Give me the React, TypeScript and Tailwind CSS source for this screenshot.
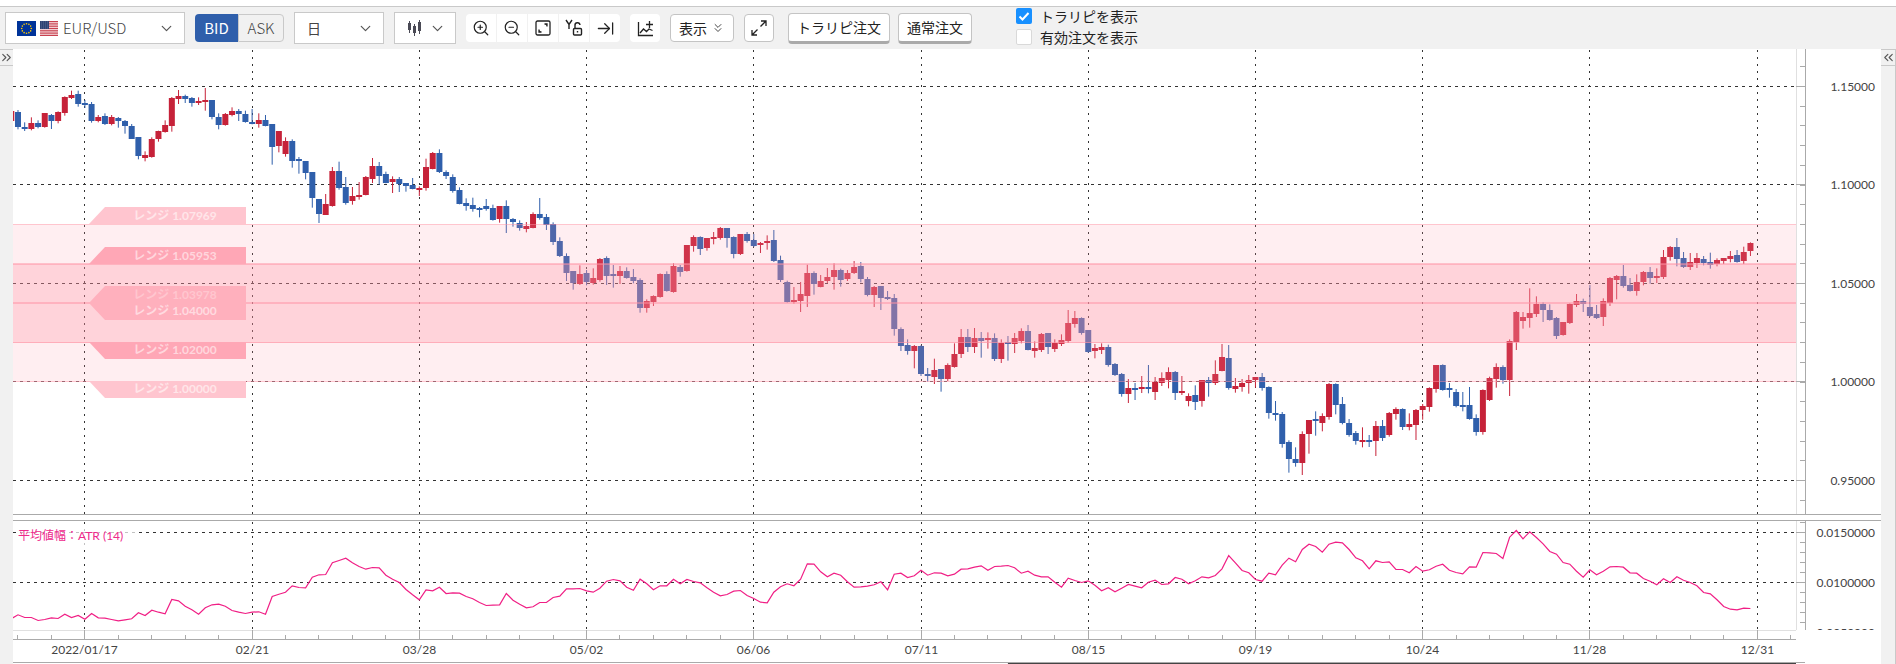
import { ArrowRightToLine, ChevronDown, ChevronsDown, ChevronsLeft, ChevronsRight, ZoomIn, ZoomOut } from "lucide-react";
import type { ReactNode } from "react";

// [direction, high, body top, body bottom, low], in thirds of a pixel
type Candle = [string, number, number, number, number];

const shift = (base: number, rows: Candle[]): Candle[] =>
  rows.map(([d, h, t, b, l]) => [d, h + base, t + base, b + base, l + base]);

const candles: Candle[] = [
  ...shift(0, [
    ["u", 178, 182, 213, 216], ["d", 180, 186, 231, 238], ["d", 217, 231, 237, 243], ["u", 202, 219, 238, 241],
    ["d", 211, 219, 231, 235], ["u", 190, 190, 231, 233], ["d", 192, 195, 213, 237], ["u", 184, 186, 213, 220],
    ["u", 139, 141, 189, 197], ["u", 122, 135, 144, 147], ["d", 122, 133, 162, 170], ["d", 150, 159, 165, 174],
    ["d", 156, 162, 213, 218], ["u", 195, 201, 214, 217], ["d", 190, 199, 224, 225], ["u", 195, 201, 222, 226],
    ["d", 201, 204, 214, 233], ["d", 210, 212, 228, 251], ["d", 222, 227, 265, 266], ["d", 261, 262, 320, 328],
    ["u", 304, 315, 323, 334], ["u", 262, 267, 321, 323], ["u", 242, 244, 268, 275], ["u", 211, 224, 246, 248],
    ["u", 141, 144, 227, 245], ["u", 120, 138, 147, 162], ["d", 134, 138, 147, 159], ["d", 141, 143, 159, 170],
    ["u", 142, 153, 157, 165], ["u", 114, 151, 155, 182], ["d", 151, 151, 202, 208], ["d", 190, 202, 226, 238],
    ["u", 189, 192, 226, 227], ["u", 172, 183, 195, 199], ["d", 177, 182, 191, 213], ["d", 182, 192, 215, 218],
    ["d", 177, 216, 222, 223], ["u", 190, 210, 223, 233], ["d", 195, 210, 228, 229], ["d", 222, 222, 291, 344],
    ["u", 243, 244, 288, 307], ["u", 262, 274, 312, 320], ["d", 268, 274, 333, 353], ["d", 321, 327, 333, 371],
    ["d", 333, 334, 370, 388], ["d", 366, 366, 444, 473], ["d", 447, 447, 492, 519], ["u", 432, 462, 494, 495],
    ["u", 351, 363, 468, 470], ["d", 335, 363, 414, 419], ["d", 381, 411, 459, 464], ["u", 411, 438, 453, 464],
    ["u", 396, 435, 442, 449], ["u", 378, 381, 435, 436], ["u", 324, 348, 387, 399], ["d", 336, 348, 377, 404],
    ["d", 365, 373, 399, 400], ["u", 379, 387, 396, 429],
  ]),
  ...shift(240, [
    ["d", 141, 148, 162, 186], ["d", 159, 159, 168, 185], ["d", 144, 165, 177, 178], ["u", 169, 173, 177, 198],
    ["u", 86, 111, 175, 182], ["u", 66, 69, 117, 118], ["d", 58, 69, 127, 129], ["d", 121, 126, 138, 147],
    ["d", 133, 141, 183, 188], ["d", 172, 180, 222, 223], ["d", 205, 220, 228, 242], ["d", 203, 225, 237, 245],
    ["d", 231, 235, 240, 262], ["d", 207, 228, 237, 242], ["d", 224, 233, 270, 272], ["u", 228, 229, 269, 278],
    ["d", 211, 228, 266, 309], ["d", 264, 267, 276, 290], ["d", 271, 279, 295, 302], ["u", 276, 288, 297, 307],
    ["u", 247, 252, 293, 295], ["d", 204, 252, 263, 269], ["d", 252, 261, 286, 300], ["d", 277, 283, 336, 345],
    ["d", 322, 333, 378, 381], ["d", 370, 378, 429, 453], ["d", 423, 424, 461, 479], ["u", 406, 433, 462, 465],
    ["d", 420, 430, 456, 466], ["u", 415, 445, 459, 464], ["u", 384, 387, 449, 455], ["d", 379, 384, 437, 465],
    ["d", 405, 432, 437, 473], ["u", 408, 423, 439, 462], ["d", 412, 423, 444, 446], ["d", 417, 441, 453, 460],
    ["d", 445, 450, 534, 548], ["u", 508, 514, 534, 548], ["u", 496, 498, 516, 528], ["u", 430, 432, 501, 503],
    ["d", 424, 432, 483, 485], ["u", 400, 409, 486, 488], ["d", 405, 411, 426, 440], ["u", 345, 346, 423, 425],
    ["u", 316, 321, 348, 365], ["d", 319, 321, 356, 375], ["u", 324, 324, 353, 362], ["u", 306, 321, 326, 343],
    ["u", 291, 294, 324, 329], ["d", 294, 294, 324, 353], ["d", 319, 321, 372, 385], ["u", 312, 312, 372, 375],
    ["d", 306, 312, 332, 338], ["d", 312, 331, 348, 351], ["u", 336, 338, 345, 369], ["u", 316, 333, 339, 359],
    ["d", 300, 331, 393, 396],
  ]),
  ...shift(480, [
    ["d", 137, 149, 210, 216], ["d", 212, 216, 275, 278], ["u", 231, 270, 275, 281], ["u", 216, 252, 273, 306],
    ["u", 164, 189, 258, 291], ["d", 184, 190, 224, 254], ["u", 195, 213, 230, 232], ["u", 174, 201, 213, 219],
    ["u", 160, 180, 201, 239], ["d", 176, 180, 209, 230], ["u", 180, 189, 207, 213], ["u", 153, 172, 189, 192],
    ["d", 156, 169, 209, 217], ["d", 201, 207, 255, 259], ["u", 228, 230, 255, 291], ["d", 228, 229, 265, 300],
    ["d", 243, 261, 266, 270], ["d", 252, 265, 359, 377], ["d", 352, 358, 408, 423], ["d", 388, 405, 423, 434],
    ["u", 405, 408, 422, 475], ["d", 406, 408, 492, 498], ["d", 474, 492, 497, 515], ["u", 446, 481, 503, 522],
    ["d", 477, 478, 507, 545], ["u", 460, 465, 507, 513], ["u", 400, 432, 471, 473], ["u", 357, 381, 432, 444],
    ["d", 357, 381, 411, 426], ["u", 354, 384, 410, 429], ["d", 366, 384, 392, 443], ["u", 367, 384, 391, 416],
    ["d", 370, 384, 447, 453], ["u", 388, 399, 447, 459], ["d", 378, 397, 402, 452], ["u", 369, 384, 402, 429],
    ["u", 355, 363, 393, 400], ["d", 345, 362, 419, 421], ["u", 394, 414, 423, 443], ["u", 369, 372, 419, 426],
    ["d", 369, 370, 411, 432], ["u", 388, 400, 417, 426], ["u", 373, 391, 402, 408], ["u", 300, 339, 393, 399],
    ["u", 303, 324, 342, 353], ["d", 322, 324, 369, 374], ["d", 360, 361, 426, 428], ["u", 402, 414, 423, 445],
    ["u", 400, 411, 419, 432], ["d", 404, 411, 465, 470], ["d", 459, 462, 494, 498], ["d", 489, 492, 551, 560],
    ["u", 507, 534, 552, 579], ["d", 519, 534, 539, 570], ["u", 498, 531, 537, 549], ["d", 465, 531, 538, 550],
    ["u", 501, 516, 546, 570],
  ]),
  ...shift(690, [
    ["u", 277, 294, 309, 318], ["u", 262, 276, 299, 325], ["d", 273, 276, 339, 360], ["u", 288, 333, 339, 345],
    ["u", 340, 348, 363, 379], ["d", 316, 346, 366, 390], ["u", 300, 301, 363, 380], ["d", 291, 300, 309, 350],
    ["u", 241, 282, 309, 315], ["u", 192, 231, 273, 274], ["d", 195, 234, 324, 329], ["u", 294, 318, 327, 338],
    ["u", 297, 308, 321, 335], ["u", 285, 300, 308, 341], ["u", 291, 291, 300, 323], ["d", 279, 291, 323, 332],
    ["d", 319, 321, 399, 416], ["d", 363, 399, 406, 422], ["d", 396, 402, 491, 503], ["d", 481, 487, 538, 578],
    ["d", 502, 537, 548, 560], ["u", 454, 462, 548, 585], ["u", 420, 420, 462, 521], ["d", 394, 417, 424, 467],
    ["u", 400, 409, 429, 454], ["u", 309, 312, 410, 419], ["d", 310, 312, 375, 403], ["d", 351, 373, 431, 433],
    ["d", 417, 429, 465, 470], ["d", 453, 460, 483, 494], ["u", 442, 480, 486, 502], ["d", 465, 480, 485, 501],
    ["u", 423, 438, 482, 528], ["d", 420, 438, 473, 483], ["u", 396, 399, 466, 470], ["u", 382, 388, 402, 419],
    ["d", 385, 388, 441, 450], ["u", 400, 432, 441, 451], ["u", 387, 390, 434, 480], ["u", 372, 378, 390, 419],
    ["u", 322, 324, 381, 395], ["u", 255, 256, 327, 338], ["d", 253, 256, 330, 332], ["d", 309, 324, 330, 353],
    ["d", 327, 336, 377, 382], ["d", 336, 375, 381, 394], ["d", 321, 375, 416, 419], ["d", 403, 413, 456, 467],
    ["u", 328, 330, 456, 464], ["u", 290, 294, 360, 363], ["u", 250, 262, 297, 323], ["d", 256, 262, 300, 311],
    ["u", 178, 184, 300, 348], ["u", 93, 96, 186, 210],
  ]),
  ...shift(510, [
    ["u", 276, 291, 303, 326], ["u", 205, 279, 293, 323], ["u", 229, 252, 282, 291], ["d", 247, 252, 270, 306],
    ["d", 253, 270, 300, 302], ["d", 291, 294, 347, 357], ["u", 306, 307, 346, 347], ["u", 250, 252, 309, 312],
    ["u", 222, 243, 255, 261], ["d", 236, 243, 252, 276], ["d", 195, 262, 288, 291], ["d", 255, 282, 294, 297],
    ["u", 235, 244, 293, 318], ["u", 171, 174, 249, 258], ["u", 165, 168, 180, 238], ["d", 135, 168, 198, 203],
    ["d", 174, 195, 213, 215], ["u", 163, 186, 212, 227], ["u", 153, 156, 186, 196], ["d", 141, 156, 174, 191],
    ["u", 145, 168, 172, 189], ["u", 90, 111, 172, 177], ["u", 78, 81, 112, 122], ["d", 54, 81, 117, 139],
    ["d", 96, 114, 140, 144], ["u", 99, 126, 140, 150], ["u", 99, 114, 129, 144], ["d", 108, 117, 129, 136],
    ["d", 98, 126, 134, 146], ["u", 115, 120, 133, 139], ["u", 114, 115, 125, 132], ["u", 93, 108, 117, 127],
    ["d", 90, 105, 126, 128], ["u", 80, 96, 123, 132], ["u", 67, 69, 93, 108],
  ]),
];

// ATR(14), same units as the candles
const atr = [
  355, 343, 351, 351, 360, 357, 352, 354, 341, 351, 345, 356, 339, 352, 353, 357, 361, 358, 355, 337, 345, 329, 335,
  340, 297, 301, 317, 328, 341, 322, 313, 311, 317, 330, 335, 339, 335, 334, 341, 288, 281, 275, 256, 261, 262, 230,
  223, 222, 187, 180, 173, 187, 198, 206, 201, 202, 224, 236, 246, 267, 283, 298, 268, 271, 260, 279, 277, 278, 288,
  295, 306, 315, 314, 313, 279, 299, 311, 322, 319, 306, 306, 291, 287, 265, 265, 264, 271, 275, 263, 242, 237, 241,
  260, 269, 236, 250, 268, 256, 256, 236, 250, 237, 243, 247, 262, 275, 286, 282, 272, 270, 285, 294, 305, 307, 275,
  259, 250, 256, 236, 190, 191, 214, 229, 218, 224, 244, 260, 259, 257, 253, 244, 268, 221, 218, 231, 226, 209, 224,
  217, 218, 226, 221, 206, 205, 200, 196, 209, 198, 197, 195, 202, 218, 212, 224, 229, 229, 245, 260, 233, 240, 246,
  241, 254, 271, 262, 274, 263, 252, 257, 262, 245, 239, 252, 250, 231, 236, 250, 241, 229, 232, 225, 205, 165, 187,
  210, 217, 237, 242, 218, 223, 194, 173, 184, 147, 131, 138, 155, 131, 125, 127, 147, 172, 181, 205, 181, 186, 184,
  207, 207, 217, 198, 212, 208, 197, 191, 209, 216, 220, 199, 200, 156, 157, 159, 174, 110, 90, 115, 94, 111, 130,
  153, 161, 186, 191, 212, 230, 208, 223, 212, 199, 198, 200, 217, 218, 234, 242, 253, 235, 246, 229, 239, 246, 256,
  276, 280, 298, 318, 326, 328, 323, 324,
];

const PLOT_W = 1783;
const dates = ["2022/01/17", "02/21", "03/28", "05/02", "06/06", "07/11", "08/15", "09/19", "10/24", "11/28", "12/31"];

const candleX = (i: number) => i * 6.689 - 1.7;
const tickX = (i: number) => Math.floor(candleX(i)) + 0.5;
const dateX = dates.map((_, k) => tickX(11 + 25 * k));

const prices = [
  { label: "1.15000", y: 37.5 },
  { label: "1.10000", y: 135.5 },
  { label: "1.05000", y: 234.5 },
  { label: "1.00000", y: 332.5 },
  { label: "0.95000", y: 431.5 },
];
const priceMinor = Array.from({ length: 24 }, (_, k) => Math.floor(37.5 + (k - 1) * 19.7) + 0.5);

const ranges = [
  { label: "レンジ 1.07969", y: 175, up: true, fill: "#ffc5cf", text: "#ffe5e9" },
  { label: "レンジ 1.05953", y: 215, up: true, fill: "#ffa7b6", text: "#ffd6dd" },
  { label: "レンジ 1.03978", y: 254, up: true, fill: "#ffb0bd", text: "#ffc6cf" },
  { label: "レンジ 1.04000", y: 254, up: false, fill: "#ffb0bd", text: "#ffdae0" },
  { label: "レンジ 1.02000", y: 293, up: false, fill: "#ffa7b6", text: "#ffd6dd" },
  { label: "レンジ 1.00000", y: 332, up: false, fill: "#ffc5cf", text: "#ffe5e9" },
];

const Grid = ({ rows, height }: { rows: number[]; height: number }) => (
  <g stroke="#333" strokeDasharray="2 5" shapeRendering="crispEdges">
    {rows.map((y) => (
      <line key={y} x1="0" x2={PLOT_W} y1={y} y2={y} strokeDasharray="3 4" />
    ))}
    {dateX.map((x) => (
      <line key={x} x1={x} x2={x} y1="1" y2={height} />
    ))}
  </g>
);

const PriceChart = () => (
  <svg className="h-[465px] min-w-0 flex-1" viewBox={`0 0 ${PLOT_W} 465`} preserveAspectRatio="none">
    <Grid rows={prices.map((p) => p.y)} height={465} />
    {candles.map(([dir, high, top, bottom, low], i) => {
      const x = candleX(i);
      return (
        <g key={i} fill={dir === "u" ? "#c62239" : "#2f5fab"}>
          <rect x={x - 0.5} y={high / 3 + 1} width="1" height={(low - high) / 3} />
          <rect x={x - 3} y={Math.round(top / 3) + 1} width="6" height={Math.max(2, Math.round((bottom - top) / 3))} />
        </g>
      );
    })}
    <g fill="#ff92a3">
      <rect x="0" y="175" width={PLOT_W} height="40" opacity="0.155" />
      <rect x="0" y="215" width={PLOT_W} height="78" opacity="0.4" />
      <rect x="0" y="293" width={PLOT_W} height="40" opacity="0.155" />
      <rect x="0" y="175" width={PLOT_W} height="1" opacity="0.45" />
      <rect x="0" y="214" width={PLOT_W} height="2" opacity="0.5" />
      <rect x="0" y="253" width={PLOT_W} height="2" opacity="0.5" />
      <rect x="0" y="293" width={PLOT_W} height="1" opacity="0.7" />
      <rect x="0" y="332" width={PLOT_W} height="1" opacity="0.45" />
    </g>
    {ranges.map(({ label, y, up, fill, text }) => (
      <g key={label}>
        <path d={up ? `M76 ${y}L92 ${y - 17}H233V${y}Z` : `M76 ${y}L92 ${y + 17}H233V${y}Z`} fill={fill} />
        <text
          x="162"
          y={up ? y - 4 : y + 12}
          textAnchor="middle"
          fill={text}
          className="font-['Lato','Noto_Sans_CJK_JP',sans-serif] text-[12px] font-bold"
        >
          {label}
        </text>
      </g>
    ))}
  </svg>
);

const AtrChart = () => (
  <svg className="h-[109px] min-w-0 flex-1" viewBox={`0 0 ${PLOT_W} 109`} preserveAspectRatio="none">
    <Grid rows={[11.5, 61.5]} height={109} />
    <rect x="4" y="6" width="118" height="18" fill="#fff" opacity="0.7" />
    <polyline
      points={atr.map((v, i) => `${candleX(i).toFixed(1)},${(v / 3 - 20.5).toFixed(1)}`).join(" ")}
      fill="none"
      stroke="#f01f85"
      strokeWidth="1.2"
    />
    <text x="5" y="19" fill="#ee2a8b" className="font-['Lato','Noto_Sans_CJK_JP',sans-serif] text-[12px]">
      平均値幅：ATR (14)
    </text>
  </svg>
);

interface AxisProps {
  height: number;
  major: { label: string; y: number }[];
  minor: number[];
}

const ValueAxis = ({ height, major, minor }: AxisProps) => (
  <svg className="w-[85px] shrink-0 overflow-hidden" height={height}>
    <path d={`M.5 0V${height}`} stroke="#e0e0e0" />
    <g stroke="#aaa">
      <path d={`M9.5 0V${height}`} />
      {minor.map((y) => (
        <path key={y} d={`M4 ${y}H9`} />
      ))}
      {major.map(({ y }) => (
        <path key={y} d={`M0 ${y}H9`} />
      ))}
    </g>
    {major.map(({ label, y }) => (
      <text
        key={label}
        x="79"
        y={y + 4}
        textAnchor="end"
        fill="#444"
        className="font-['Lato',sans-serif] text-[12px]"
      >
        {label}
      </text>
    ))}
  </svg>
);

const DateAxis = () => (
  <div className="flex h-[34px]">
    <svg className="h-full min-w-0 flex-1 overflow-visible">
      <g stroke="#aaa" shapeRendering="crispEdges">
        <line x1="0" x2="100%" y1="0.5" y2="0.5" stroke="#e0e0e0" />
        <line x1="0" x2="100%" y1="9.5" y2="9.5" />
        {Array.from({ length: 54 }, (_, k) => {
          const x = `${(tickX(1 + 5 * k) / PLOT_W) * 100}%`;
          return <line key={k} x1={x} x2={x} y1={k % 5 === 2 ? 0 : 5} y2="9" />;
        })}
        <line x1="0" x2="100%" y1="32.5" y2="32.5" />
      </g>
      <line x1="55.8%" x2="100%" y1="33.5" y2="33.5" stroke="#444" />
      {dates.map((date, k) => (
        <text
          key={date}
          x={`${(dateX[k] / PLOT_W) * 100}%`}
          y="24"
          textAnchor="middle"
          fill="#444"
          className="font-['Lato',sans-serif] text-[12px]"
        >
          {date}
        </text>
      ))}
    </svg>
    <svg className="h-full w-[85px] shrink-0">
      <path d="M0 32.5H9" stroke="#aaa" />
    </svg>
  </div>
);

const EuFlag = () => (
  <svg width="19" height="15" viewBox="0 0 19 15" className="shrink-0">
    <rect width="19" height="15" fill="#039" />
    {Array.from({ length: 12 }, (_, k) => (
      <circle
        key={k}
        cx={9.5 + 4.8 * Math.sin((k * Math.PI) / 6)}
        cy={7.5 - 4.8 * Math.cos((k * Math.PI) / 6)}
        r="0.8"
        fill="#fc0"
      />
    ))}
  </svg>
);

const UsFlag = () => (
  <svg width="18" height="15" viewBox="0 0 18 15" className="shrink-0">
    <rect width="18" height="15" fill="#f6dfe2" />
    {[0, 1, 2, 3, 4, 5, 6].map((k) => (
      <rect key={k} y={k * 2.3} width="18" height="1.2" fill="#c8414f" />
    ))}
    <rect width="9" height="8" fill="#2f4373" />
    {[1, 3, 5, 7].map((y) => (
      <path key={y} d={`M1 ${y}H9`} stroke="#8d99b8" strokeWidth="0.6" strokeDasharray="0.8 1.2" />
    ))}
  </svg>
);

const Chevron = () => (
  <ChevronDown size={17} strokeWidth={1.7} className="pointer-events-none shrink-0 text-[#555]" />
);

const CandleIcon = () => (
  <svg width="15" height="16" viewBox="0 0 15 16" fill="#4a4a55">
    <path d="M1 3h3v7H1zM6 6h3v7H6zM11 2h3v9h-3z" />
    <path d="M2 1h1v12H2zM7 4h1v12H7zM12 0h1v14h-1z" />
  </svg>
);

const FitIcon = () => (
  <svg width="16" height="16" viewBox="0 0 16 16" fill="none" stroke="#222" strokeWidth="1.3">
    <rect x="1" y="1" width="14" height="14" rx="1.5" />
    <path d="M9.5 4H12v2.5M6.5 12H4V9.5" />
    <path d="M10 4h2v2zM4 10v2h2z" fill="#222" stroke="none" />
  </svg>
);

const YLockIcon = () => (
  <svg width="18" height="18" viewBox="0 0 18 18" fill="none" stroke="#222" strokeWidth="1.4">
    <path d="M1 1l3 4.5L7 1M4 5.5V10" />
    <rect x="8.5" y="9.5" width="8" height="6.5" rx="1" />
    <path d="M10 9.5V6.500a2.500 2.500 0 0 1 5-.5M12.500 12v1.500" />
  </svg>
);

const IndicatorIcon = () => (
  <svg width="17" height="17" viewBox="0 0 17 17" fill="none" stroke="#222" strokeWidth="1.3">
    <path d="M1.5 2v13.5H16M3 13l3.5-4 3 2.5L12 9l3.5 1.5M12.5 1v7M9 4.5h7" />
  </svg>
);

const ExpandIcon = () => (
  <svg width="16" height="16" viewBox="0 0 16 16" fill="none" stroke="#222" strokeWidth="1.3">
    <path d="M9.5 6.5L15 1M10 1h5v5M6.5 9.5L1 15M1 10v5h5" />
  </svg>
);

const ToolButton = ({ label, children }: { label: string; children: ReactNode }) => (
  <button aria-label={label} className="flex h-7 w-[30px] items-center justify-center bg-white text-[#222]">
    {children}
  </button>
);

const orderButton =
  "h-[31px] rounded border border-b-[3px] border-[#c4c4c4] border-b-[#aaa] bg-white px-2 text-sm text-[#222]";

const Toolbar = () => (
  <header className="mt-[6px] flex h-[43px] items-center gap-[10px] border-t border-[#c9c9c9] bg-[#f1f1f1] pl-[5px] text-[15px] text-[#444]">
    <label className="relative flex h-8 w-[180px] items-center gap-1 border border-[#c9c9c9] bg-white pr-[9px] pl-[11px]">
      <EuFlag />
      <UsFlag />
      <select aria-label="通貨ペア" className="min-w-0 flex-1 appearance-none pl-px font-light outline-none">
        <option>EUR/USD</option>
      </select>
      <Chevron />
    </label>
    <div className="flex h-7 w-[89px]">
      <button className="w-[43px] rounded-l bg-[#2f5fab] text-white">BID</button>
      <button className="flex-1 rounded-r border border-[#c9c9c9] font-light">ASK</button>
    </div>
    <label className="flex h-8 w-[90px] items-center border border-[#c9c9c9] bg-white pr-[9px] pl-3">
      <select aria-label="足種" className="min-w-0 flex-1 appearance-none text-sm outline-none">
        <option>日</option>
      </select>
      <Chevron />
    </label>
    <button
      aria-label="チャート種類"
      className="flex h-8 w-[62px] items-center justify-between border border-[#c9c9c9] bg-white pr-[9px] pl-3"
    >
      <CandleIcon />
      <Chevron />
    </button>
    <div className="flex gap-px overflow-hidden rounded">
      <ToolButton label="拡大">
        <ZoomIn size={18} strokeWidth={1.6} />
      </ToolButton>
      <ToolButton label="縮小">
        <ZoomOut size={18} strokeWidth={1.6} />
      </ToolButton>
      <ToolButton label="全体表示">
        <FitIcon />
      </ToolButton>
      <ToolButton label="Y軸固定">
        <YLockIcon />
      </ToolButton>
      <ToolButton label="最新へ">
        <ArrowRightToLine size={19} strokeWidth={1.6} />
      </ToolButton>
    </div>
    <div className="overflow-hidden rounded">
      <ToolButton label="指標を追加">
        <IndicatorIcon />
      </ToolButton>
    </div>
    <button className="flex h-7 w-16 items-center justify-center gap-1 rounded border border-[#c4c4c4] bg-white text-sm text-[#222]">
      表示
      <ChevronsDown size={14} strokeWidth={1.7} className="text-[#444]" />
    </button>
    <button
      aria-label="全画面"
      className="flex h-7 w-[30px] items-center justify-center rounded border border-[#c4c4c4] bg-white"
    >
      <ExpandIcon />
    </button>
    <div className="ml-1 flex gap-2">
      <button className={orderButton}>トラリピ注文</button>
      <button className={orderButton}>通常注文</button>
    </div>
    <div className="ml-[34px] flex flex-col gap-px pb-1 text-sm leading-5 text-[#222]">
      <label className="flex items-center gap-2">
        <span className="relative h-4 w-4">
          <input type="checkbox" defaultChecked className="block h-4 w-4 appearance-none rounded-xs bg-[#1890ff]" />
          <svg className="pointer-events-none absolute inset-0" width="16" height="16" fill="none" stroke="#fff" strokeWidth="2">
            <path d="M3.5 8.5l3 3 6-6.5" />
          </svg>
        </span>
        トラリピを表示
      </label>
      <label className="flex items-center gap-2">
        <input type="checkbox" className="h-4 w-4 appearance-none rounded-xs border border-[#d9d9d9] bg-white" />
        有効注文を表示
      </label>
    </div>
  </header>
);

const App = () => (
  <div className="flex min-h-screen flex-col overflow-hidden bg-white font-['Noto_Sans_CJK_JP',sans-serif]">
    <Toolbar />
    <div className="flex flex-1">
      <aside className="w-[13px] shrink-0 bg-[#f1f1f1]">
        <button
          aria-label="左パネルを開く"
          className="flex h-[17px] w-full items-center justify-center border-y border-[#c9c9c9] text-[#555]"
        >
          <ChevronsRight size={15} strokeWidth={1.8} className="shrink-0" />
        </button>
      </aside>
      <main className="min-w-0 flex-1">
        <section className="flex border-b border-[#aaa]">
          <PriceChart />
          <ValueAxis height={465} major={prices} minor={priceMinor} />
        </section>
        <section className="mt-[5px] flex border-t border-[#aaa]">
          <AtrChart />
          <ValueAxis
            height={109}
            major={[
              { label: "0.0150000", y: 11.5 },
              { label: "0.0100000", y: 61.5 },
              { label: "0.0050000", y: 111.5 },
            ]}
            minor={[1.5, 21.5, 31.5, 41.5, 51.5, 71.5, 81.5, 91.5, 101.5]}
          />
        </section>
        <DateAxis />
      </main>
      <aside className="w-[15px] shrink-0 border-r border-[#c9c9c9] bg-[#f1f1f1]">
        <button
          aria-label="右パネルを開く"
          className="flex h-[17px] w-full items-center justify-center border-y border-[#c9c9c9] text-[#555]"
        >
          <ChevronsLeft size={15} strokeWidth={1.8} className="shrink-0" />
        </button>
      </aside>
    </div>
  </div>
);

export default App;
